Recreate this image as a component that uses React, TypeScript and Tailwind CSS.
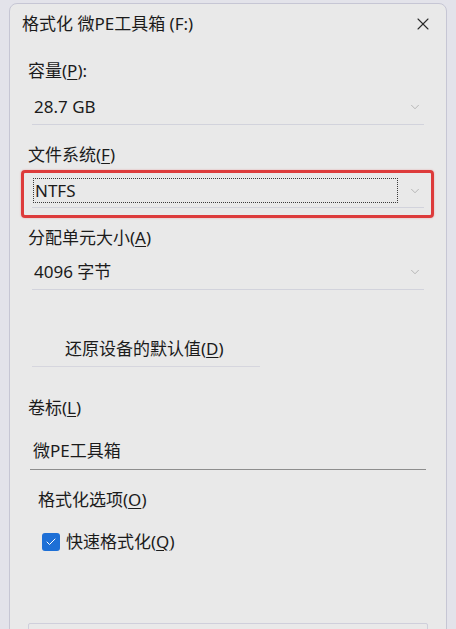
import { X, ChevronDown, Check } from 'lucide-react';

const font = { fontFamily: '"Noto Sans", "Noto Sans CJK SC", sans-serif' };

function Label({ text, hot, tail = '', pl = 'pl-[18px]' }: { text: string; hot: string; tail?: string; pl?: string }) {
  return (
    <div className={`h-[30px] flex items-center ${pl} text-[17px] text-[#1b1b1b]`}>
      <span>
        {text}(<span className="underline underline-offset-2">{hot}</span>){tail}
      </span>
    </div>
  );
}

function Combo({ value }: { value: string }) {
  return (
    <div className="ml-[22px] w-[392px] h-[35px] border-b border-[#d2d3dc] flex items-center justify-between">
      <span className="pl-[2px] text-[17px] text-[#1b1b1b]">{value}</span>
      <ChevronDown className="w-[14px] h-[14px] mr-[2px] text-[#9a9a9a]" strokeWidth={1.1} />
    </div>
  );
}

export default function App() {
  return (
    <div className="h-[629px] overflow-hidden bg-[#e3e3ea] px-[9px] pt-[3px]" style={font}>
      <div className="h-[640px] bg-[#e9e9e9] border border-[#c6c6d4] rounded-t-[8px]">
        <div className="h-[38px] flex items-center justify-between pl-[12px] pr-[13px] pt-[2px]">
          <span className="text-[17px] text-[#1b1b1b]">格式化 微PE工具箱 (F:)</span>
          <X className="w-[20px] h-[20px] text-[#2a2a2a]" strokeWidth={1.3} />
        </div>

        <div className="h-[14px]" />
        <Label text="容量" hot="P" tail=":" />
        <div className="h-[4px]" />
        <Combo value="28.7 GB" />

        <div className="h-[15px]" />
        <Label text="文件系统" hot="F" />
        <div className="ml-[11px] w-[413px] h-[48px] border-[3px] border-[#dd3b3b] rounded-[4px] shadow-[0_0_2px_rgba(221,59,59,0.4)]">
          <div className="ml-[8px] mt-[2px] w-[392px] h-[33px] border-b border-[#d2d3dc] flex justify-between">
            <div className="ml-[1px] mt-[3px] w-[365px] h-[25px] border border-dotted border-[#3a3a3a] flex items-center">
              <span className="pl-[1px] text-[17px] text-[#1b1b1b]">NTFS</span>
            </div>
            <ChevronDown className="w-[14px] h-[14px] mt-[9px] mr-[2px] text-[#9a9a9a]" strokeWidth={1.1} />
          </div>
        </div>

        <div className="h-[5px]" />
        <Label text="分配单元大小" hot="A" />
        <div className="h-[2px]" />
        <Combo value="4096 字节" />

        <div className="h-[41px]" />
        <div className="ml-[22px] w-[228px] h-[36px] border-b border-[#d6d6de] flex items-center pl-[33px] text-[17px] text-[#1b1b1b]">
          <span>
            还原设备的默认值(<span className="underline underline-offset-2">D</span>)
          </span>
        </div>

        <div className="h-[26px]" />
        <Label text="卷标" hot="L" />
        <div className="h-[10px]" />
        <div className="ml-[20px] w-[396px] h-[37px] border-b border-[#8d8d8d] flex items-center pl-[3px] text-[17px] text-[#1b1b1b]">
          微PE工具箱
        </div>

        <div className="h-[15px]" />
        <Label text="格式化选项" hot="O" pl="pl-[28px]" />
        <div className="h-[14px]" />
        <div className="h-[26px] flex items-center pl-[32px] gap-[6px] text-[17px] text-[#1b1b1b]">
          <div className="w-[18px] h-[18px] rounded-[3px] bg-[#1d6fd6] flex items-center justify-center">
            <Check className="w-[12px] h-[12px] text-white" strokeWidth={2} />
          </div>
          <span>
            快速格式化(<span className="underline underline-offset-2">Q</span>)
          </span>
        </div>

        <div className="h-[68px]" />
        <div className="ml-[18px] w-[400px] h-[30px] border border-[#cfcfdb] rounded-[2px]" />
      </div>
    </div>
  );
}
